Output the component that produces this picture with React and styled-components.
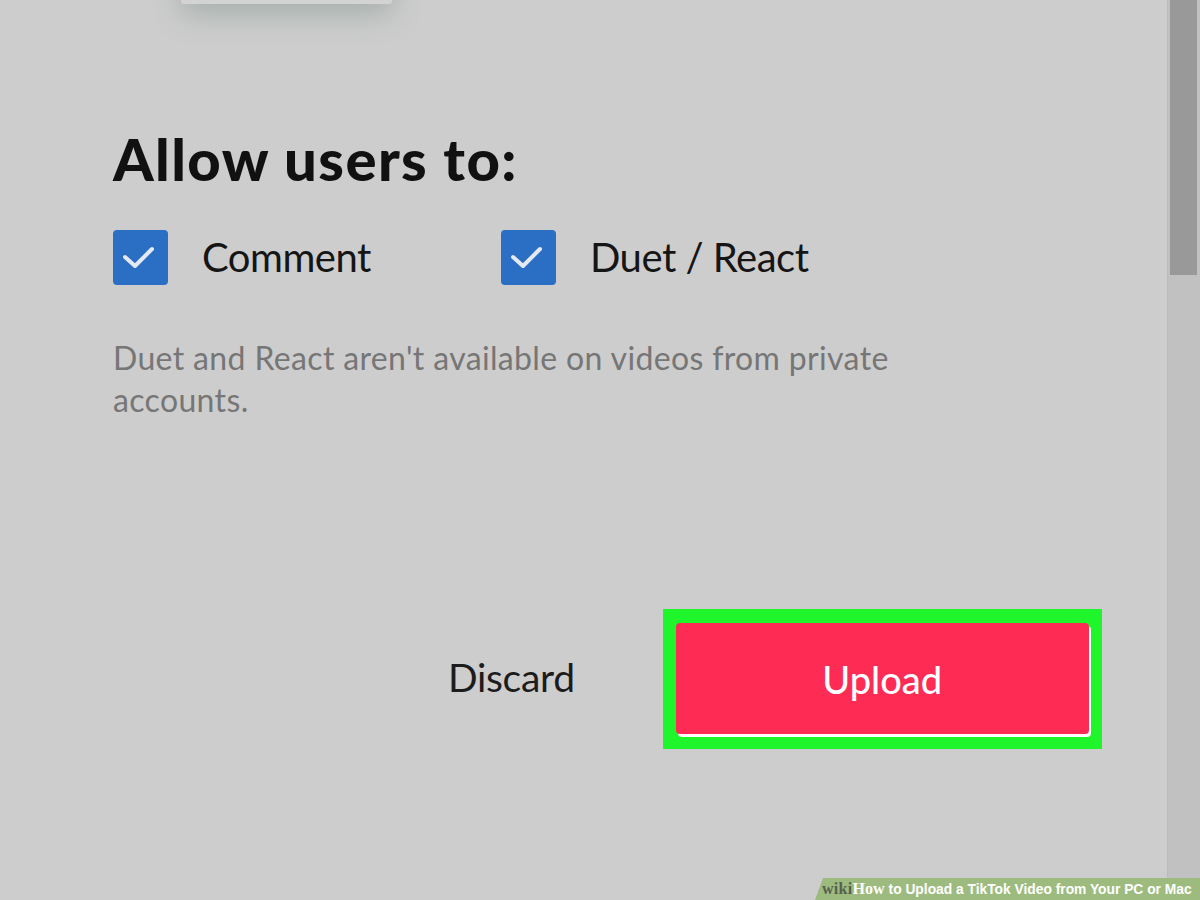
import React from 'react'
import styled, { createGlobalStyle } from 'styled-components'

const GlobalStyle = createGlobalStyle`
  html, body {
    margin: 0;
    padding: 0;
    background: #cdcdcd;
    overflow: hidden;
  }
  * {
    box-sizing: border-box;
  }
`

const Page = styled.div`
  position: relative;
  width: 1200px;
  height: 900px;
  display: flex;
  background: #cdcdcd;
  overflow: hidden;
  font-family: Lato, 'Noto Sans', sans-serif;
`

const Main = styled.div`
  flex: 1;
  padding-left: 113px;
  display: flex;
  flex-direction: column;
`

const TopCard = styled.div`
  margin-left: 68px;
  margin-top: -60px;
  width: 211px;
  height: 64px;
  background: #d3d3d3;
  border-radius: 0 0 3px 3px;
  box-shadow: 0 10px 28px rgba(120, 140, 135, 0.45);
`

const Heading = styled.h1`
  margin: 120px 0 0;
  font-size: 58px;
  line-height: 70px;
  font-weight: 900;
  color: #111;
  letter-spacing: 1.4px;
`

const CheckRow = styled.div`
  margin-top: 36px;
  display: flex;
  align-items: center;
  height: 54px;
`

const CheckItem = styled.label`
  display: flex;
  align-items: center;
  width: ${props => props.width}px;
  gap: 34px;
  font-size: 40px;
  line-height: 54px;
  color: #151515;
  letter-spacing: -0.5px;
`

const Box = styled.span`
  width: 55px;
  height: 55px;
  flex: none;
  border-radius: 4px;
  background: #2b6fc5;
  display: flex;
  align-items: center;
  justify-content: center;
`

const Note = styled.p`
  margin: 53px 0 0;
  width: 820px;
  font-size: 32px;
  line-height: 42px;
  color: #767676;
  letter-spacing: 0.35px;
`

const Actions = styled.div`
  margin-top: 188px;
  display: flex;
  align-items: center;
  padding-left: 335px;
`

const Discard = styled.span`
  font-size: 39px;
  color: #1c1c1c;
  margin-right: 88px;
  margin-top: -4px;
  letter-spacing: -0.3px;
`

const Highlight = styled.div`
  background: #1ef52a;
  padding: 14px 13px 15px 13px;
`

const UploadButton = styled.button`
  width: 413px;
  height: 111px;
  border: none;
  border-radius: 4px;
  background: #fe2c55;
  box-shadow: 2px 3px 0 #ffffff;
  color: #fff;
  font-family: Lato, 'Noto Sans', sans-serif;
  font-size: 38px;
  font-weight: 500;
  display: flex;
  align-items: center;
  justify-content: center;
  padding: 0;
`

const Scrollbar = styled.div`
  width: 33px;
  flex: none;
  background: #c1c1c1;
  border-left: 1px solid #bcbcbc;
  padding: 0 3px 0 2px;
`

const Thumb = styled.div`
  height: 275px;
  background: #999999;
`

const Watermark = styled.div`
  position: absolute;
  right: 0;
  bottom: 0;
  width: 385px;
  height: 22px;
  background: #9dbb7e;
  clip-path: polygon(8px 0, 100% 0, 100% 100%, 0 100%);
  display: flex;
  align-items: center;
  padding-left: 7px;
  font-family: 'Liberation Sans', Arial, sans-serif;
  font-weight: 700;
  font-size: 13.8px;
  color: #fff;
  white-space: nowrap;
`

const Wiki = styled.span`
  font-family: 'Liberation Serif', 'DejaVu Serif', serif;
  font-size: 16px;
  color: #58604f;
  letter-spacing: 0.3px;
`

const How = styled.span`
  font-family: 'Liberation Serif', 'DejaVu Serif', serif;
  font-size: 16px;
  color: #fff;
  margin-right: 4px;
`

const Check = () => (
  <Box>
    <svg width="55" height="55" viewBox="0 0 55 55">
      <path d="M12 27 L22 36 L39 19" fill="none" stroke="#e4e9f2" strokeWidth="4" strokeLinecap="round" strokeLinejoin="round" />
    </svg>
  </Box>
)

const App = () => (
  <Page>
    <GlobalStyle />
    <Main>
      <TopCard />
      <Heading>Allow users to:</Heading>
      <CheckRow>
        <CheckItem width={388}>
          <Check />
          Comment
        </CheckItem>
        <CheckItem width={400}>
          <Check />
          Duet / React
        </CheckItem>
      </CheckRow>
      <Note>Duet and React aren't available on videos from private accounts.</Note>
      <Actions>
        <Discard>Discard</Discard>
        <Highlight>
          <UploadButton>Upload</UploadButton>
        </Highlight>
      </Actions>
    </Main>
    <Scrollbar>
      <Thumb />
    </Scrollbar>
    <Watermark>
      <Wiki>wiki</Wiki>
      <How>How</How>
      to Upload a TikTok Video from Your PC or Mac
    </Watermark>
  </Page>
)

export default App
